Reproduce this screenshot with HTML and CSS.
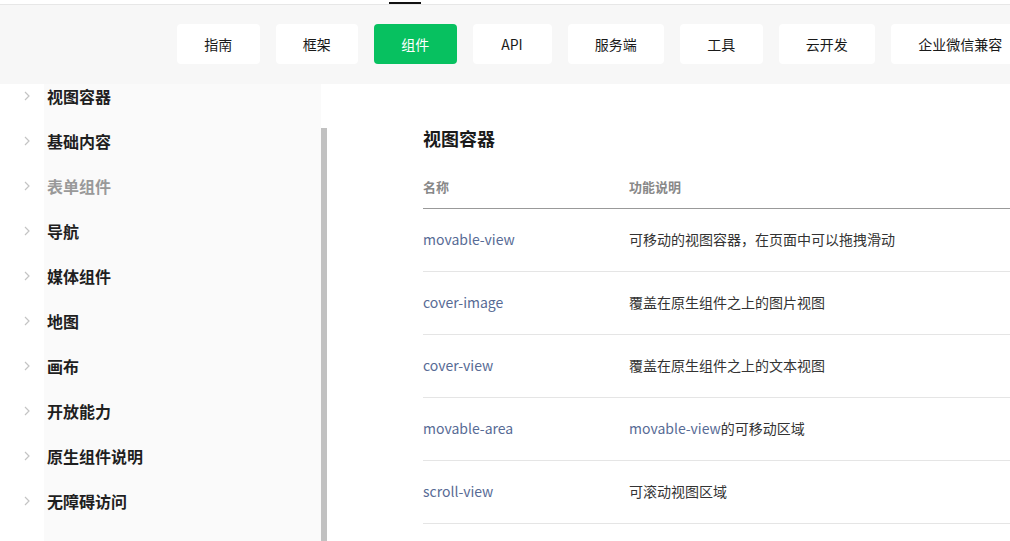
FILE: index.html
```html
<!DOCTYPE html>
<html lang="zh-CN">
<head>
<meta charset="utf-8">
<title>视图容器</title>
<link rel="stylesheet" href="styles.css">
</head>
<body>
<div class="page">
  <header class="header">
    <div class="topstrip"><span class="indicator"></span></div>
    <nav class="nav">
      <a class="nav-btn">指南</a>
      <a class="nav-btn">框架</a>
      <a class="nav-btn active">组件</a>
      <a class="nav-btn">API</a>
      <a class="nav-btn">服务端</a>
      <a class="nav-btn">工具</a>
      <a class="nav-btn">云开发</a>
      <a class="nav-btn">企业微信兼容</a>
    </nav>
  </header>
  <div class="body">
    <aside class="sidebar">
      <ul class="menu">
        <li class="menu-item"><svg class="chev" viewBox="0 0 6 10"><polyline points="1,1 5,5 1,9"/></svg><span>视图容器</span></li>
        <li class="menu-item"><svg class="chev" viewBox="0 0 6 10"><polyline points="1,1 5,5 1,9"/></svg><span>基础内容</span></li>
        <li class="menu-item muted"><svg class="chev" viewBox="0 0 6 10"><polyline points="1,1 5,5 1,9"/></svg><span>表单组件</span></li>
        <li class="menu-item"><svg class="chev" viewBox="0 0 6 10"><polyline points="1,1 5,5 1,9"/></svg><span>导航</span></li>
        <li class="menu-item"><svg class="chev" viewBox="0 0 6 10"><polyline points="1,1 5,5 1,9"/></svg><span>媒体组件</span></li>
        <li class="menu-item"><svg class="chev" viewBox="0 0 6 10"><polyline points="1,1 5,5 1,9"/></svg><span>地图</span></li>
        <li class="menu-item"><svg class="chev" viewBox="0 0 6 10"><polyline points="1,1 5,5 1,9"/></svg><span>画布</span></li>
        <li class="menu-item"><svg class="chev" viewBox="0 0 6 10"><polyline points="1,1 5,5 1,9"/></svg><span>开放能力</span></li>
        <li class="menu-item"><svg class="chev" viewBox="0 0 6 10"><polyline points="1,1 5,5 1,9"/></svg><span>原生组件说明</span></li>
        <li class="menu-item"><svg class="chev" viewBox="0 0 6 10"><polyline points="1,1 5,5 1,9"/></svg><span>无障碍访问</span></li>
      </ul>
    </aside>
    <div class="scroll-track"><div class="scroll-thumb"></div></div>
    <main class="main">
      <h1 class="title">视图容器</h1>
      <table class="table">
        <thead>
          <tr><th class="col-name">名称</th><th>功能说明</th></tr>
        </thead>
        <tbody>
          <tr><td><a class="link">movable-view</a></td><td>可移动的视图容器，在页面中可以拖拽滑动</td></tr>
          <tr><td><a class="link">cover-image</a></td><td>覆盖在原生组件之上的图片视图</td></tr>
          <tr><td><a class="link">cover-view</a></td><td>覆盖在原生组件之上的文本视图</td></tr>
          <tr><td><a class="link">movable-area</a></td><td><a class="link">movable-view</a>的可移动区域</td></tr>
          <tr><td><a class="link">scroll-view</a></td><td>可滚动视图区域</td></tr>
        </tbody>
      </table>
    </main>
  </div>
</div>
</body>
</html>
```

FILE: styles.css
```css
* { box-sizing: border-box; }
html, body { margin: 0; padding: 0; }
body {
  font-family: "Noto Sans CJK SC", "Noto Sans", sans-serif;
  color: #333;
  background: #fff;
  width: 1010px;
  height: 541px;
  overflow: hidden;
}
.page { display: flex; flex-direction: column; height: 541px; }

.header { flex: none; position: relative; z-index: 2; }
.topstrip { height: 4px; background: #fff; display: flex; align-items: flex-end; }
.indicator { display: block; width: 32px; height: 2px; margin-left: 389px; background: #111; }
.nav {
  height: 80px;
  border-top: 1px solid #e7e7e7;
  background: #f7f7f7;
  display: flex;
  align-items: flex-start;
  gap: 16px;
  padding: 19px 0 0 177px;
  white-space: nowrap;
}
.nav-btn {
  flex: none;
  height: 40px;
  line-height: 40px;
  min-width: 79px;
  padding: 0 27.25px;
  text-align: center;
  background: #fff;
  border-radius: 4px;
  font-size: 14px;
  color: #1a1a1a;
}
.nav-btn.active { background: #07c160; color: #fff; }

.body { flex: 1; display: flex; min-height: 0; overflow: hidden; }
.sidebar {
  flex: none;
  width: 321px;
  overflow: hidden;
  background: linear-gradient(to right, #fff 0, #fff 44px, #fafafa 44px);
}
.menu { list-style: none; margin: -11px 0 0; padding: 0; }
.menu-item {
  height: 45px;
  display: flex;
  align-items: center;
  font-size: 16px;
  font-weight: 700;
  color: #1f1f1f;
}
.menu-item.muted { color: #999; }
.chev {
  width: 6px;
  height: 10px;
  margin: 0 17px 0 24px;
  fill: none;
  stroke: #c4c4c4;
  stroke-width: 1.2;
}
.scroll-track { flex: none; width: 6px; padding-top: 44px; background: #fff; }
.scroll-thumb { width: 6px; height: 100%; background: #c1c1c1; }

.main { flex: 1; padding: 41px 0 0 96px; overflow: hidden; }
.title { margin: 0; font-size: 18px; line-height: 26px; font-weight: 700; color: #1a1a1a; }
.table { margin-top: 17px; border-collapse: collapse; width: 700px; text-align: left; }
.table th {
  font-size: 13px;
  line-height: 20px;
  font-weight: 600;
  color: #888;
  padding: 9px 0 11px;
  border-bottom: 1px solid #999;
}
.table th.col-name, .table td:first-child { width: 206px; }
.table td {
  font-size: 14px;
  line-height: 22px;
  padding: 19px 0 21px;
  border-bottom: 1px solid #e5e5e5;
  color: #333;
}
.link { color: #576b95; text-decoration: none; }
```
